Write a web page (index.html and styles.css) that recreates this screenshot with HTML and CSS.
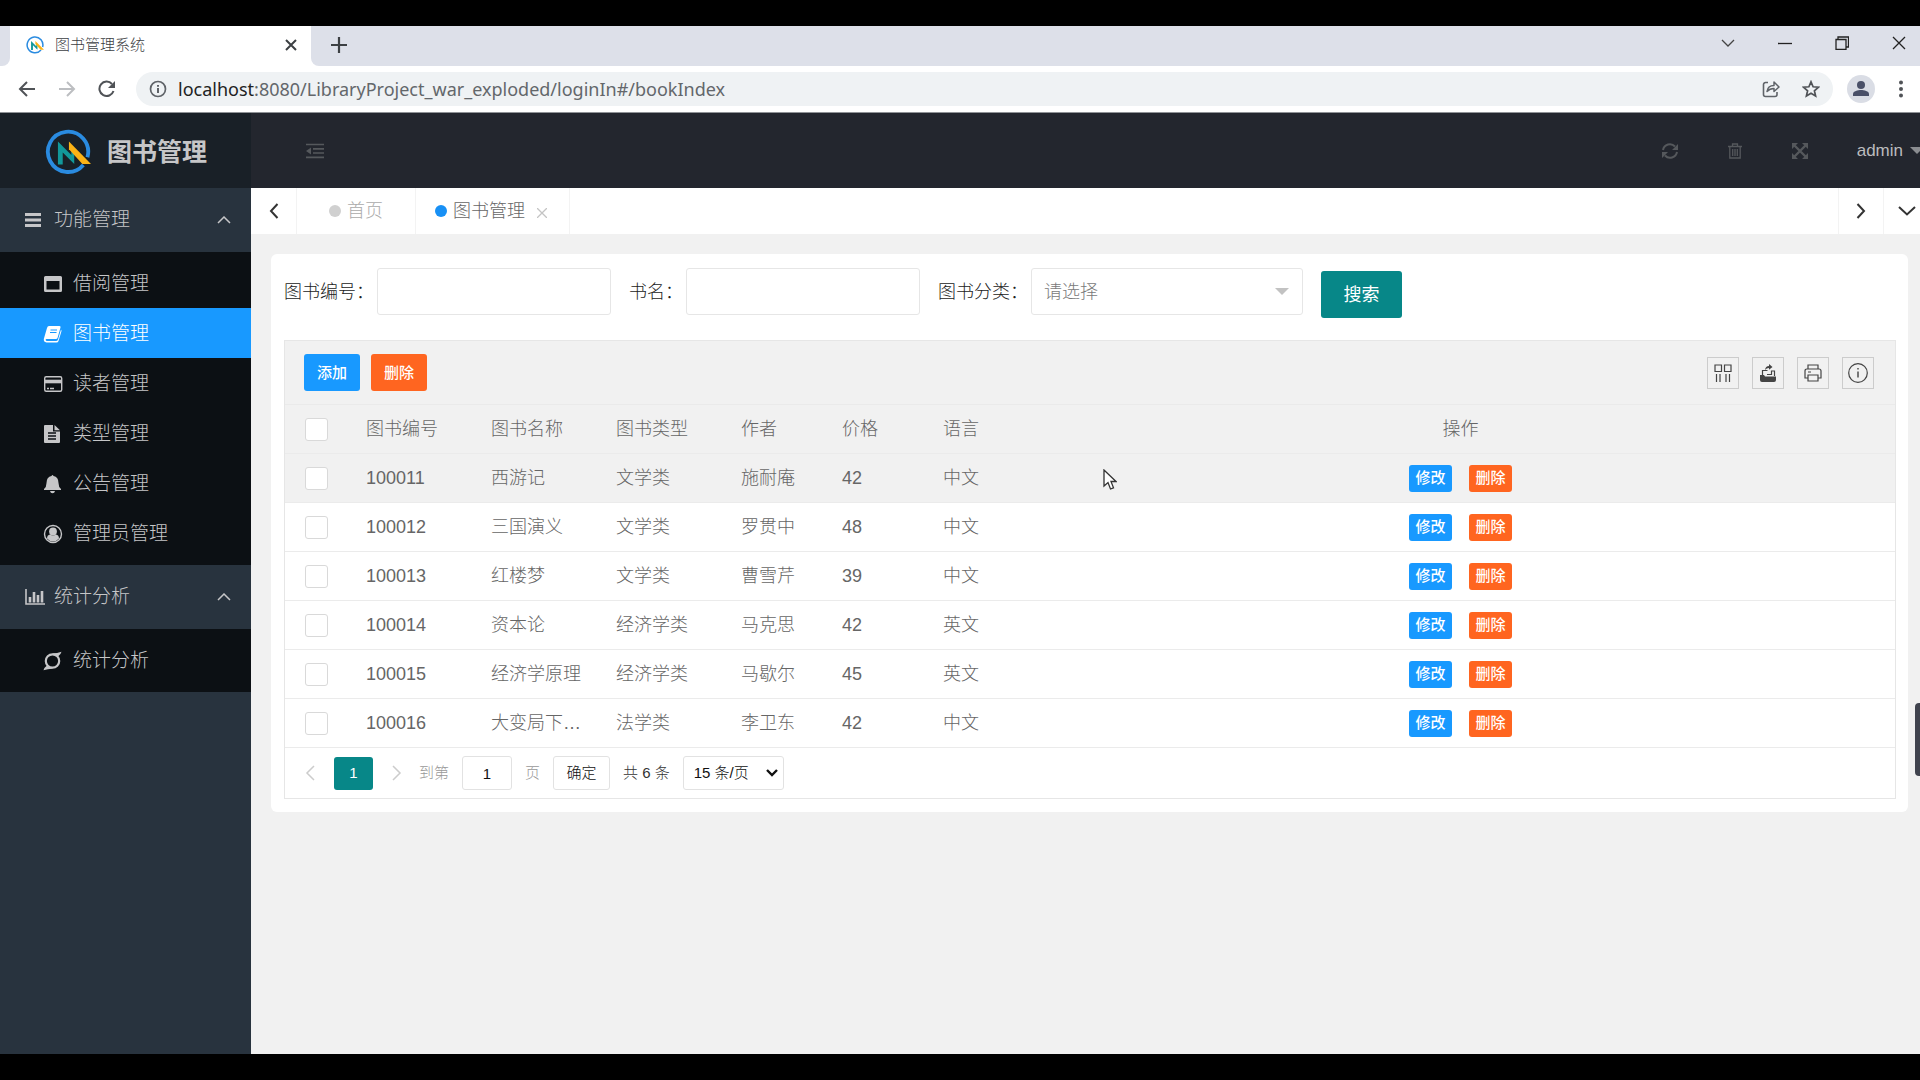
FILE: index.html
```html
<!DOCTYPE html>
<html lang="zh-CN">
<head>
<meta charset="utf-8">
<title>图书管理系统</title>
<link rel="stylesheet" href="styles.css">
</head>
<body>
<svg class="defs" aria-hidden="true">
  <symbol id="logo" viewBox="0 0 48 48">
    <path d="M40 37.500A21 21 0 1 1 44.300 29.400" fill="none" stroke="#2a8be0" stroke-width="4"/>
    <path d="M13.500 13l14 14v-8l3 3v14.500L18.500 24.500V37h-5z" fill="#12989a"/>
    <path d="M25 13l23 23.500h-9L25 21z" fill="#fcb316"/>
  </symbol>
  <symbol id="up" viewBox="0 0 14 8"><path d="M1 7l6-6 6 6" fill="none" stroke="currentColor" stroke-width="1.500"/></symbol>
</svg>

<div class="screen">
  <header class="browser">
    <div class="tabstrip">
      <div class="tabstrip-edge"></div>
      <div class="btab">
        <svg width="18" height="18"><use href="#logo"/></svg>
        <span class="btab-title">图书管理系统</span>
        <button class="plain" aria-label="关闭标签页"><svg width="12" height="12" viewBox="0 0 12 12"><path d="M1 1l10 10M11 1L1 11" stroke="#3c4043" stroke-width="2"/></svg></button>
      </div>
      <div class="newtab"><button class="plain" aria-label="新标签页"><svg width="16" height="16" viewBox="0 0 16 16"><path d="M8 0v16M0 8h16" stroke="#3c4043" stroke-width="2.200"/></svg></button></div>
      <div class="winbtns">
        <button class="plain" aria-label="搜索标签页"><svg width="14" height="14" viewBox="0 0 14 14"><path d="M1 4l6 6 6-6" fill="none" stroke="#444" stroke-width="1.300"/></svg></button>
        <button class="plain" aria-label="最小化"><svg width="14" height="14" viewBox="0 0 14 14"><path d="M0 7.500h14" stroke="#222" stroke-width="1.300"/></svg></button>
        <button class="plain" aria-label="还原"><svg width="14" height="14" viewBox="0 0 14 14"><path d="M1 3.500h10v10H1zM3 3V1h10.500v10H11" fill="none" stroke="#222" stroke-width="1.300"/></svg></button>
        <button class="plain" aria-label="关闭"><svg width="14" height="14" viewBox="0 0 14 14"><path d="M1 1l12 12M13 1L1 13" stroke="#222" stroke-width="1.300"/></svg></button>
      </div>
    </div>
    <div class="toolbar">
      <div class="nav">
        <button class="plain" aria-label="后退"><svg width="18" height="18" viewBox="0 0 18 18"><path d="M17 9H2M9 2L2 9l7 7" fill="none" stroke="#505357" stroke-width="2"/></svg></button>
        <button class="plain" aria-label="前进"><svg width="18" height="18" viewBox="0 0 18 18"><path d="M1 9h15M9 2l7 7-7 7" fill="none" stroke="#bcbec1" stroke-width="2"/></svg></button>
        <button class="plain" aria-label="刷新"><svg width="18" height="18" viewBox="0 0 18 18"><path d="M15.500 11A7.200 7.200 0 1 1 14 4" fill="none" stroke="#505357" stroke-width="2"/><path d="M17 1v7h-7z" fill="#505357"/></svg></button>
      </div>
      <div class="address">
        <svg width="18" height="18" viewBox="0 0 18 18"><circle cx="9" cy="9" r="7.500" fill="none" stroke="#5f6368" stroke-width="1.700"/><path d="M9 8v5M9 5v1.800" stroke="#5f6368" stroke-width="2"/></svg>
        <div class="url"><span class="host">localhost</span>:8080/LibraryProject_war_exploded/loginIn#/bookIndex</div>
        <button class="plain" aria-label="分享"><svg width="18" height="18" viewBox="0 0 18 18"><path d="M6 2.500H3.500a2 2 0 0 0-2 2v10a2 2 0 0 0 2 2H13a2 2 0 0 0 2-2V12" fill="none" stroke="#5f6368" stroke-width="1.600"/><path d="M5 11.500c.5-4 3-6 7-6V2l5 5-5 4.500V8.500c-3 0-5 .8-7 3z" fill="none" stroke="#5f6368" stroke-width="1.500" stroke-linejoin="round"/></svg></button>
        <button class="plain" aria-label="收藏"><svg width="18" height="18" viewBox="0 0 18 18"><path d="M9 1.800l2.100 5 5.400.4-4.100 3.600 1.200 5.200L9 13.200 4.400 16l1.200-5.200L1.500 7.200l5.400-.4z" fill="none" stroke="#505357" stroke-width="1.700"/></svg></button>
      </div>
      <button class="plain avatar" aria-label="个人资料"><svg width="28" height="28" viewBox="0 0 28 28"><circle cx="14" cy="14" r="14" fill="#dadde5"/><circle cx="14" cy="10" r="4" fill="#4a5068"/><path d="M6 21v-2c0-3 5-4 8-4s8 1 8 4v2z" fill="#4a5068"/></svg></button>
      <button class="plain" aria-label="菜单"><svg width="6" height="18" viewBox="0 0 6 18"><g fill="#505357"><circle cx="3" cy="2.500" r="2"/><circle cx="3" cy="9" r="2"/><circle cx="3" cy="15.500" r="2"/></g></svg></button>
    </div>
  </header>

  <div class="app">
    <aside class="side">
      <a class="brand" href="#/home"><svg width="46" height="46"><use href="#logo"/></svg><span>图书管理</span></a>
      <nav>
        <button class="group"><svg width="16" height="14" viewBox="0 0 16 14"><path d="M0 1.500h16M0 7h16M0 12.500h16" stroke="currentColor" stroke-width="3"/></svg><span>功能管理</span><svg class="caret" width="14" height="8"><use href="#up"/></svg></button>
        <ul class="sub">
          <li><a href="#/borrow"><svg width="20" height="20" viewBox="0 0 20 20"><path fill-rule="evenodd" d="M2.500 2h15a1.500 1.500 0 0 1 1.500 1.500v13a1.500 1.500 0 0 1-1.500 1.500h-15A1.500 1.500 0 0 1 1 16.500v-13A1.500 1.500 0 0 1 2.500 2zM3.500 7v8.500h13V7z" fill="currentColor"/></svg>借阅管理</a></li>
          <li><a class="on" href="#/bookIndex"><svg width="20" height="20" viewBox="0 0 20 20"><path d="M6 2h10.500q1.500 0 1 1.500L14.500 14q-.4 1-1.500 1H3.500q-1 .2-.8 1t1.300 1H13q1.500 0 2-1.500L18 5.500q.8.800.4 2L15.500 17q-.5 1.500-2 1.500h-10Q.5 18 .8 15L4 4q.5-2 2-2z" fill="currentColor"/><path d="M7.500 6h6.500M7 8.500h6.500" stroke="#1899ff"/></svg>图书管理</a></li>
          <li><a href="#/reader"><svg width="20" height="20" viewBox="0 0 20 20"><rect x="1.700" y="2.700" width="17" height="14.600" rx="1.500" fill="none" stroke="currentColor" stroke-width="1.400"/><path d="M1 7.500h18" stroke="currentColor" stroke-width="3.600"/><path d="M4 14.500h2M7 14.500h4" stroke="currentColor" stroke-width="1.300"/></svg>读者管理</a></li>
          <li><a href="#/type"><svg width="20" height="20" viewBox="0 0 20 20"><path d="M2 1h8v6.500h7V18q0 1-1 1H2q-1 0-1-1V2q0-1 1-1zM11.500 1l5.500 5.200h-5.500z" fill="currentColor"/><path d="M5 9h8M5 12h8M5 15h8" stroke="#0c1014" stroke-width="1.300"/></svg>类型管理</a></li>
          <li><a href="#/notice"><svg width="20" height="20" viewBox="0 0 20 20"><path d="M8.500 2q1-1.800 2 0 5 1 5 7 0 4 2.500 6v1H1v-1q2.500-2 2.500-6 0-6 5-7zM7 17h5q-.5 2.200-2.500 2.200T7 17z" fill="currentColor"/></svg>公告管理</a></li>
          <li><a href="#/admin"><svg width="20" height="20" viewBox="0 0 20 20"><circle cx="10" cy="10" r="8.500" fill="none" stroke="currentColor" stroke-width="1.400"/><circle cx="10" cy="7.500" r="3.900" fill="currentColor"/><path d="M4 14.500q0-3.500 3-4 3 2 6 0 3 .5 3 4-2.500 3-6 3t-6-3z" fill="currentColor"/></svg>管理员管理</a></li>
        </ul>
        <button class="group"><svg width="20" height="16" viewBox="0 0 20 16"><path d="M1 0v15h19" fill="none" stroke="currentColor" stroke-width="1.600"/><path d="M5 8v5.500M9 3v10.500M13 6v7.500M17 2v11.500" stroke="currentColor" stroke-width="2.600"/></svg><span>统计分析</span><svg class="caret" width="14" height="8"><use href="#up"/></svg></button>
        <ul class="sub">
          <li><a href="#/stat"><svg width="20" height="20" viewBox="0 0 20 20"><circle cx="9.500" cy="10" r="6.700" fill="none" stroke="currentColor" stroke-width="2.200"/><path d="M9 2.300q4 .3 9.500-1.500-.5 2.500-3.500 4.700zM10 17.700q-4-.3-9.500 1.500.5-2.500 3.500-4.700z" fill="currentColor"/></svg>统计分析</a></li>
        </ul>
      </nav>
    </aside>

    <div class="main">
      <header class="top">
        <button class="plain" aria-label="收起菜单"><svg width="18" height="16" viewBox="0 0 18 16"><path d="M0 1.500h18M7 5.800h11M7 10h11M0 14.300h18" stroke="currentColor" stroke-width="1.700"/><path d="M5 4.500v7L0 8z" fill="currentColor"/></svg></button>
        <div class="top-right">
          <button class="plain" aria-label="刷新"><svg width="16" height="16" viewBox="0 0 16 16"><path d="M1 7a7 7 0 0 1 12-3.500M15 9a7 7 0 0 1-12 3.500" fill="none" stroke="currentColor" stroke-width="2"/><path d="M16 1v6h-6zM0 15V9h6z" fill="currentColor"/></svg></button>
          <button class="plain" aria-label="清理"><svg width="16" height="16" viewBox="0 0 16 16"><path d="M1 3.500h14M5.500 3V1h5v2M2.800 4v11h10.400V4M5.700 6v7M8 6v7M10.300 6v7" fill="none" stroke="currentColor" stroke-width="1.300"/></svg></button>
          <button class="plain" aria-label="全屏"><svg width="16" height="16" viewBox="0 0 16 16"><path d="M0 0h6L0 6zM16 0v6l-6-6zM0 16v-6l6 6zM16 16h-6l6-6z" fill="currentColor"/><path d="M2 2l12 12M14 2L2 14" stroke="currentColor" stroke-width="2.400"/></svg></button>
        </div>
        <button class="plain user">admin<svg width="14" height="7" viewBox="0 0 14 7"><path d="M0 0h14L7 7z" fill="#8b8d91"/></svg></button>
      </header>

      <div class="tabs">
        <button class="tabctl" aria-label="向左"><svg width="10" height="16" viewBox="0 0 10 16"><path d="M8.500 1L2 8l6.500 7" fill="none" stroke="#333" stroke-width="2"/></svg></button>
        <a class="ptab" href="#/home"><i class="dot"></i>首页</a>
        <div class="ptab cur"><i class="dot"></i><a href="#/bookIndex">图书管理</a><button class="plain" aria-label="关闭"><svg width="10" height="10" viewBox="0 0 10 10"><path d="M0 0l10 10M10 0L0 10" stroke="#c4c4c4" stroke-width="1.300"/></svg></button></div>
        <button class="tabctl right" aria-label="向右"><svg width="10" height="16" viewBox="0 0 10 16"><path d="M1.500 1L8 8l-6.500 7" fill="none" stroke="#333" stroke-width="2"/></svg></button>
        <button class="tabctl last" aria-label="更多"><svg width="18" height="10" viewBox="0 0 18 10"><path d="M1 1l8 7.500L17 1" fill="none" stroke="#333" stroke-width="2"/></svg></button>
      </div>

      <main class="card">
        <form class="search">
          <div class="field"><label for="bid">图书编号：</label><input id="bid" type="text"></div>
          <div class="field"><label for="bname">书名：</label><input id="bname" type="text"></div>
          <div class="field"><label for="btype">图书分类：</label><div class="pick"><select id="btype"><option>请选择</option></select><svg width="14" height="7" viewBox="0 0 14 7"><path d="M0 0h14L7 7z" fill="#c2c2c2"/></svg></div></div>
          <button class="go" type="button">搜索</button>
        </form>

        <section class="grid">
          <div class="gtools">
            <button class="btn blue">添加</button>
            <button class="btn orange">删除</button>
            <div class="icons">
              <button aria-label="筛选列"><svg width="18" height="18" viewBox="0 0 18 18"><path d="M1 1h6.500v6.500H1zM10.500 1H17v6.500h-6.500zM2.500 10v8M6 10v8M12 10v8M15.500 10v8" fill="none" stroke="currentColor" stroke-width="1.200"/></svg></button>
              <button aria-label="导出"><svg width="18" height="18" viewBox="0 0 18 18"><path d="M1 11h4l1 1.500h11V16q0 2-2 2H3q-2 0-2-2z" fill="currentColor"/><path d="M3.500 11V6.500h5M15.500 12V7h-3v3.500H8" fill="none" stroke="currentColor" stroke-width="1.200"/><path d="M6 6q.5-4 4-4V0l3.500 3L10 5.700V4Q7.500 4 6 6z" fill="currentColor"/></svg></button>
              <button aria-label="打印"><svg width="18" height="18" viewBox="0 0 18 18"><path d="M4 5V1h10v4M4 14H1V7q0-2 2-2h12q2 0 2 2v7h-3M4 11h10v6H4zM4 8h3" fill="none" stroke="currentColor" stroke-width="1.200"/></svg></button>
              <button aria-label="提示"><svg width="20" height="20" viewBox="0 0 20 20"><circle cx="10" cy="10" r="9.300" fill="none" stroke="currentColor" stroke-width="1.200"/><path d="M10 8.500v6M10 5v1.600" stroke="currentColor" stroke-width="1.400"/></svg></button>
            </div>
          </div>
          <table>
            <colgroup><col class="c-check"><col class="c-wide"><col class="c-wide"><col class="c-wide"><col class="c-thin"><col class="c-thin"><col class="c-thin"><col></colgroup>
            <thead><tr><th><input type="checkbox" aria-label="全选"></th><th>图书编号</th><th>图书名称</th><th>图书类型</th><th>作者</th><th>价格</th><th>语言</th><th class="ops">操作</th></tr></thead>
            <tbody>
              <tr class="hover"><td><input type="checkbox" aria-label="选择"></td><td>100011</td><td>西游记</td><td>文学类</td><td>施耐庵</td><td>42</td><td>中文</td><td class="ops"><button class="btn xs blue">修改</button><button class="btn xs orange">删除</button></td></tr>
              <tr><td><input type="checkbox" aria-label="选择"></td><td>100012</td><td>三国演义</td><td>文学类</td><td>罗贯中</td><td>48</td><td>中文</td><td class="ops"><button class="btn xs blue">修改</button><button class="btn xs orange">删除</button></td></tr>
              <tr><td><input type="checkbox" aria-label="选择"></td><td>100013</td><td>红楼梦</td><td>文学类</td><td>曹雪芹</td><td>39</td><td>中文</td><td class="ops"><button class="btn xs blue">修改</button><button class="btn xs orange">删除</button></td></tr>
              <tr><td><input type="checkbox" aria-label="选择"></td><td>100014</td><td>资本论</td><td>经济学类</td><td>马克思</td><td>42</td><td>英文</td><td class="ops"><button class="btn xs blue">修改</button><button class="btn xs orange">删除</button></td></tr>
              <tr><td><input type="checkbox" aria-label="选择"></td><td>100015</td><td>经济学原理</td><td>经济学类</td><td>马歇尔</td><td>45</td><td>英文</td><td class="ops"><button class="btn xs blue">修改</button><button class="btn xs orange">删除</button></td></tr>
              <tr><td><input type="checkbox" aria-label="选择"></td><td>100016</td><td>大变局下…</td><td>法学类</td><td>李卫东</td><td>42</td><td>中文</td><td class="ops"><button class="btn xs blue">修改</button><button class="btn xs orange">删除</button></td></tr>
            </tbody>
          </table>
          <div class="pager">
            <button class="plain step" aria-label="上一页"><svg width="10" height="16" viewBox="0 0 10 16"><path d="M9 1L2 8l7 7" fill="none" stroke="#ccc" stroke-width="1.500"/></svg></button>
            <button class="page">1</button>
            <button class="plain step" aria-label="下一页"><svg width="10" height="16" viewBox="0 0 10 16"><path d="M1 1l7 7-7 7" fill="none" stroke="#ccc" stroke-width="1.500"/></svg></button>
            <label class="dim" for="pg">到第</label>
            <input id="pg" class="box pg" type="text" value="1">
            <span class="dim">页</span>
            <button class="box ok">确定</button>
            <span class="total">共 6 条</span>
            <div class="size"><select class="box" aria-label="每页条数"><option>15 条/页</option></select><svg width="12" height="8" viewBox="0 0 12 8"><path d="M1 1l5 5 5-5" fill="none" stroke="#111" stroke-width="2.400"/></svg></div>
          </div>
        </section>
      </main>
    </div>
  </div>
</div>
<div class="handle"></div>
<svg class="cursor" width="14" height="22" viewBox="0 0 14 22"><path d="M1 1v16l4-3.500L7.500 20l3-1.200L8 12.500h5z" fill="#fff" stroke="#333" stroke-width="1.300"/></svg>
</body>
</html>
```
FILE: styles.css
```css
* { box-sizing: border-box; }

body {
  margin: 0;
  background: #000;
  color: #666;
  font: 18px/24px "Liberation Sans", "Noto Sans CJK SC", sans-serif;
  font-weight: 300;
}

button, input, select { font: inherit; color: inherit; margin: 0; }
button { cursor: pointer; }
a { color: inherit; text-decoration: none; }
svg { display: block; flex: none; }
ul { list-style: none; margin: 0; padding: 0; }
.defs { position: absolute; width: 0; height: 0; }

.plain {
  border: 0;
  background: none;
  padding: 0;
  display: flex;
  align-items: center;
  justify-content: center;
}

.screen {
  min-height: 100vh;
  padding: 26px 0;
  display: flex;
  flex-direction: column;
  overflow: hidden;
}

/* browser frame */
.browser { background: #fff; border-bottom: 1px solid #8f9296; }
.tabstrip { display: flex; height: 40px; background: #fff; }
.tabstrip-edge { width: 10px; background: #dde0e9; border-radius: 0 0 8px 0; }
.btab {
  width: 301px;
  padding: 0 14px 2px 16px;
  display: flex;
  align-items: center;
  gap: 11px;
}
.btab-title { flex: 1; font-size: 15px; color: #3c4043; }
.newtab {
  flex: 1;
  display: flex;
  align-items: center;
  background: #dde0e9;
  border-radius: 0 0 0 8px;
  padding: 0 0 2px 20px;
}
.winbtns {
  display: flex;
  align-items: center;
  gap: 43px;
  padding: 0 14px 7px 0;
  background: #dde0e9;
}
.toolbar { display: flex; align-items: center; height: 46px; padding: 0 16px 0 18px; }
.nav { display: flex; gap: 22px; width: 118px; }
.address {
  flex: 1;
  height: 34px;
  border-radius: 17px;
  background: #eff2f4;
  display: flex;
  align-items: center;
  padding: 0 13px;
}
.url {
  flex: 1;
  margin-left: 11px;
  color: #63676b;
  font: 18px/24px "Noto Sans", sans-serif;
}
.url .host { color: #222; }
.address button { margin-left: 22px; }
.avatar { margin: 0 23px 0 14px; }

/* application */
.app { flex: 1; display: flex; background: #f1f1f1; }
.side { width: 251px; flex: none; background: #28333e; color: #c6c6c8; }
.brand {
  height: 75px;
  display: flex;
  align-items: center;
  gap: 16px;
  padding: 3px 0 0 45px;
  background: #192027;
  font-size: 25px;
  font-weight: 700;
}
.group {
  width: 100%;
  height: 64px;
  border: 0;
  background: none;
  display: flex;
  align-items: center;
  padding: 0 20px 0 25px;
  font-size: 19px;
  text-align: left;
}
.group svg:first-child { margin-right: 9px; }
.group svg[width="16"] { margin-right: 13px; }
.group span { flex: 1; }
.sub { background: #0c1014; padding: 6px 0 7px; }
.sub a {
  height: 50px;
  display: flex;
  align-items: center;
  gap: 10px;
  padding: 2px 0 0 43px;
  font-size: 19px;
}
.sub .on { background: #1899ff; color: #fff; }

.main { flex: 1; min-width: 0; }
.top {
  height: 75px;
  display: flex;
  align-items: center;
  justify-content: space-between;
  background: #23262e;
  color: #55585c;
  padding-left: 55px;
}
.top-right { display: flex; gap: 49px; margin-left: auto; }
.user { margin: 0 -4px 0 49px; gap: 7px; color: #bbbcbe; font-size: 17px; }

.tabs { display: flex; height: 46px; background: #fff; }
.tabctl {
  width: 46px;
  border: 0;
  border-right: 1px solid #f3f3f3;
  background: #fff;
  padding: 0;
  display: flex;
  align-items: center;
  justify-content: center;
}
.tabctl.right { margin-left: auto; border-left: 1px solid #f3f3f3; }
.tabctl.last { width: 36px; border: 0; padding-left: 10px; }
.ptab {
  display: flex;
  align-items: center;
  gap: 6px;
  padding: 0 32px;
  border-right: 1px solid #f3f3f3;
  color: #aaa;
}
.ptab.cur { padding: 0 22px 0 19px; color: #666; }
.ptab button { margin: 4px 0 0 6px; }
.dot { width: 12px; height: 12px; border-radius: 50%; background: #d0d0d0; }
.cur .dot { background: #1890f5; }

.card {
  margin: 20px 12px 20px 20px;
  padding: 14px 12px 13px 13px;
  background: #fff;
  border-radius: 6px;
}
.search { display: flex; align-items: flex-start; gap: 18px; height: 50px; color: #222; }
.field { display: flex; align-items: center; white-space: nowrap; }
.field label { margin-right: 3px; }
.field input, .pick select {
  width: 234px;
  height: 47px;
  padding: 0 12px;
  border: 1px solid #e6e6e6;
  border-radius: 3px;
  background: #fff;
}
.pick, .size { position: relative; }
.pick select, .size select { appearance: none; }
.pick select { width: 272px; color: #7a7a7a; }
.pick svg { position: absolute; right: 14px; top: 20px; pointer-events: none; }
.go {
  height: 47px;
  width: 81px;
  border: 0;
  border-radius: 3px;
  background: #078788;
  color: #fff;
  font-weight: 400;
  align-self: flex-end;
}

.grid { margin-top: 22px; border: 1px solid #e6e6e6; }
.gtools {
  height: 64px;
  display: flex;
  align-items: center;
  gap: 11px;
  padding: 0 21px 0 19px;
  background: #f1f1f1;
  border-bottom: 1px solid #eaeaea;
}
.btn {
  width: 56px;
  height: 37px;
  padding: 0;
  border: 0;
  border-radius: 3px;
  color: #fff;
  font-size: 15px;
  font-weight: 500;
}
.blue { background: #1899ff; }
.orange { background: #ff6520; }
.btn.xs { width: 43px; height: 27px; line-height: 24px; vertical-align: middle; }
.xs + .xs { margin-left: 17px; }
.icons { display: flex; gap: 13px; margin-left: auto; }
.icons button {
  width: 32px;
  height: 32px;
  padding: 0;
  border: 1px solid #ccc;
  background: none;
  color: #444;
  display: flex;
  align-items: center;
  justify-content: center;
}

table { width: 100%; table-layout: fixed; border-collapse: separate; border-spacing: 0; }
.c-check { width: 63px; }
.c-wide { width: 125px; }
.c-thin { width: 101px; }
th, td {
  height: 49px;
  padding: 0 0 0 18px;
  text-align: left;
  font-weight: 300;
  white-space: nowrap;
  border-bottom: 1px solid #ebebeb;
}
thead, .hover { background: #f1f1f1; }
.ops { text-align: center; padding: 0; }
th:first-child, td:first-child { padding-left: 20px; }
td input, th input {
  appearance: none;
  display: block;
  width: 23px;
  height: 23px;
  border: 1px solid #d9d9d9;
  border-radius: 3px;
  background: #fff;
}

.pager { height: 50px; display: flex; align-items: center; padding-left: 20px; font-size: 15px; color: #333; }
.step { width: 10px; }
.page {
  width: 39px;
  height: 33px;
  margin: 0 19px;
  border: 0;
  border-radius: 3px;
  background: #078788;
  color: #fff;
}
.dim { color: #999; margin: 0 13px; }
.step + .dim { margin-left: 17px; }
.box { height: 34px; border: 1px solid #e2e2e2; border-radius: 3px; background: #fff; padding: 0; color: #111; }
.pg { width: 50px; text-align: center; }
.ok { width: 57px; }
.total { margin: 0 13px; }
.size select { width: 101px; padding-left: 10px; }
.size svg { position: absolute; right: 6px; top: 13px; pointer-events: none; }

.handle { position: absolute; right: 0; top: 703px; width: 5px; height: 73px; border-radius: 4px 0 0 4px; background: #40434e; }
.cursor { position: absolute; left: 1103px; top: 469px; }
```
